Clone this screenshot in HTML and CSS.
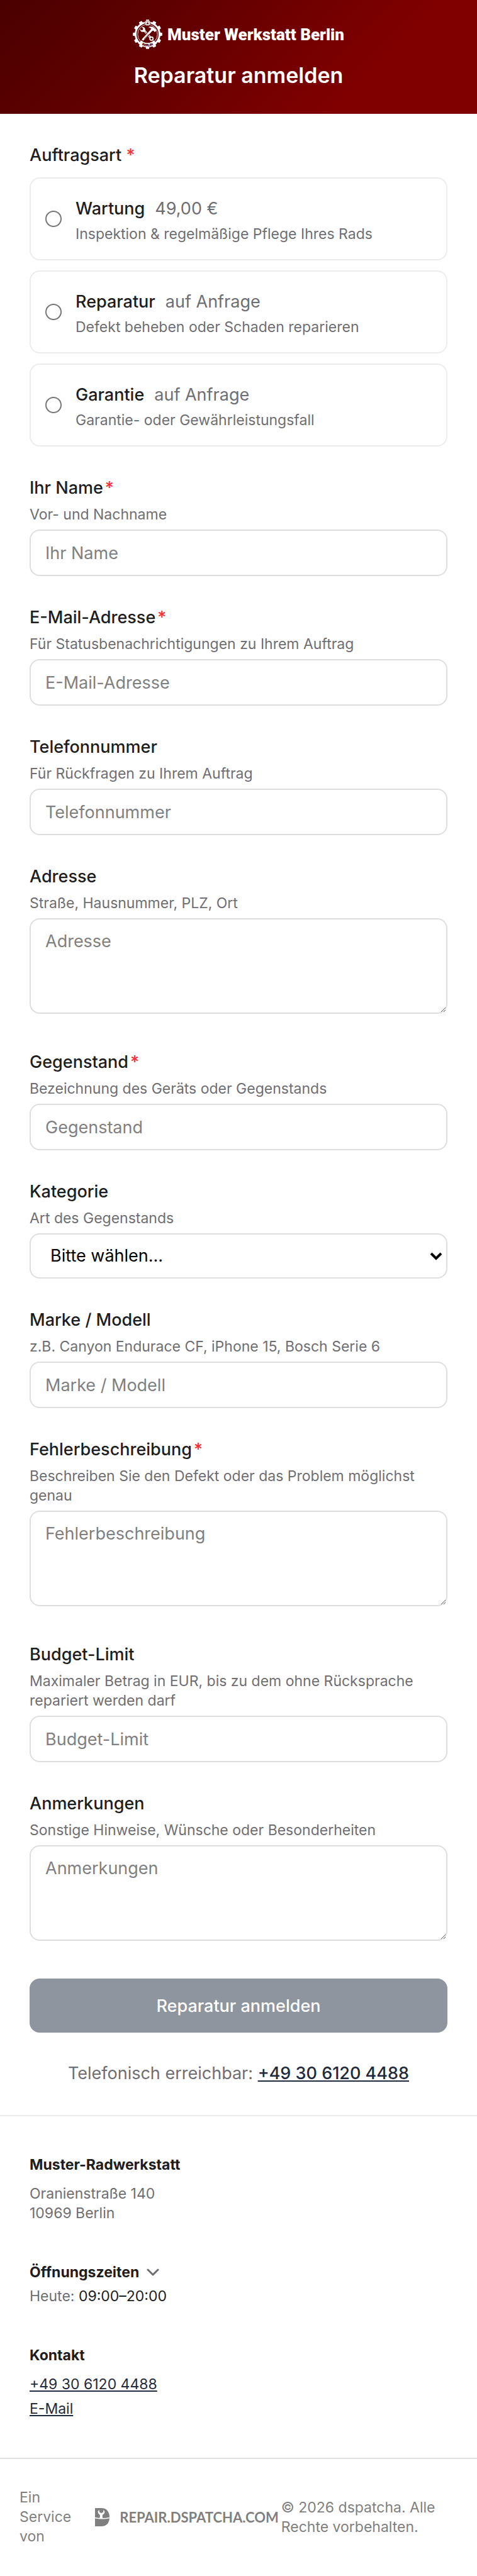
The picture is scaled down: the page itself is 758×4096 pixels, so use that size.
FILE: index.html
```html
<!DOCTYPE html>
<html lang="de">
<head>
  <meta charset="utf-8">
  <meta name="viewport" content="width=device-width, initial-scale=1">
  <title>Reparatur anmelden</title>
  <link rel="stylesheet" href="styles.css">
</head>
<body>
  <header class="header">
    <div class="brand">
      <svg class="brand-icon" viewBox="0 0 218 216" aria-hidden="true">
        <!-- gear -->
        <g fill="#fff">
          <path id="tooth" d="M95 18 L98 0 H120 L123 18 Z"/>
          <use href="#tooth" transform="rotate(30 109 108)"/>
          <use href="#tooth" transform="rotate(60 109 108)"/>
          <use href="#tooth" transform="rotate(90 109 108)"/>
          <use href="#tooth" transform="rotate(120 109 108)"/>
          <use href="#tooth" transform="rotate(150 109 108)"/>
          <use href="#tooth" transform="rotate(180 109 108)"/>
          <use href="#tooth" transform="rotate(210 109 108)"/>
          <use href="#tooth" transform="rotate(240 109 108)"/>
          <use href="#tooth" transform="rotate(270 109 108)"/>
          <use href="#tooth" transform="rotate(300 109 108)"/>
          <use href="#tooth" transform="rotate(330 109 108)"/>
        </g>
        <circle cx="109" cy="108" r="88" fill="none" stroke="#fff" stroke-width="13"/>
        <circle cx="109" cy="108" r="73" fill="none" stroke="#fff" stroke-width="4"/>
        <!-- top badge with star -->
        <path d="M90 10 H128 V36 L118 44 H100 L90 36 Z" fill="#fff" stroke="#5c0000" stroke-width="3"/>
        <path d="M109 15 L112 24 H121 L114 29 L117 38 L109 32 L101 38 L104 29 L97 24 H106 Z" fill="#5c0000"/>
        <!-- bottom band -->
        <path d="M52 164 A80 80 0 0 0 166 164" fill="none" stroke="#fff" stroke-width="32"/>
        <path id="band" d="M51 176 A90 90 0 0 0 167 176" fill="none"/>
        <text class="brand-band"><textPath href="#band" startOffset="50%" text-anchor="middle">BERLIN</textPath></text>
        <!-- wrench -->
        <path d="M84 80 L130 132" stroke="#fff" stroke-width="15"/>
        <path d="M87 84 L126 128" stroke="#5c0000" stroke-width="4"/>
        <path d="M66 55 L77 66 L74 76 L64 79 L55 68 C52 82 63 93 77 90 L85 93 L95 83 L91 76 C94 62 82 52 66 55 Z" fill="#fff"/>
        <circle cx="138" cy="140" r="12" fill="none" stroke="#fff" stroke-width="8"/>
        <!-- hammer -->
        <path d="M72 150 L142 74" stroke="#5c0000" stroke-width="24"/>
        <path d="M71 151 L142 74" stroke="#fff" stroke-width="15"/>
        <path d="M83 143 L118 105" stroke="#5c0000" stroke-width="3"/>
        <path d="M113 57 C128 47 148 50 158 62 L170 73 L174 81 L163 92 L155 86 L153 80 L143 84 L132 73 L136 67 C129 60 122 57 113 57 Z" fill="#fff"/>
      </svg>
      <span class="brand-name">Muster Werkstatt Berlin</span>
    </div>
    <h1 class="title">Reparatur anmelden</h1>
  </header>

  <main class="main">
    <form class="form">
      <fieldset class="types">
        <legend class="label">Auftragsart <span class="required">*</span></legend>
        <div class="type-list">
          <label class="type">
            <input class="radio" type="radio" name="type" value="wartung">
            <span class="type-text">
              <span class="type-head"><b class="type-name">Wartung</b><span>49,00 €</span></span>
              <span class="type-desc">Inspektion &amp; regelmäßige Pflege Ihres Rads</span>
            </span>
          </label>
          <label class="type">
            <input class="radio" type="radio" name="type" value="reparatur">
            <span class="type-text">
              <span class="type-head"><b class="type-name">Reparatur</b><span>auf Anfrage</span></span>
              <span class="type-desc">Defekt beheben oder Schaden reparieren</span>
            </span>
          </label>
          <label class="type">
            <input class="radio" type="radio" name="type" value="garantie">
            <span class="type-text">
              <span class="type-head"><b class="type-name">Garantie</b><span>auf Anfrage</span></span>
              <span class="type-desc">Garantie- oder Gewährleistungsfall</span>
            </span>
          </label>
        </div>
      </fieldset>

      <div class="field">
        <label class="label" for="name">Ihr Name<span class="required required-tight">*</span></label>
        <p class="hint">Vor- und Nachname</p>
        <input class="input" id="name" type="text" placeholder="Ihr Name">
      </div>
      <div class="field">
        <label class="label" for="email">E-Mail-Adresse<span class="required required-tight">*</span></label>
        <p class="hint">Für Statusbenachrichtigungen zu Ihrem Auftrag</p>
        <input class="input" id="email" type="email" placeholder="E-Mail-Adresse">
      </div>
      <div class="field">
        <label class="label" for="phone">Telefonnummer</label>
        <p class="hint">Für Rückfragen zu Ihrem Auftrag</p>
        <input class="input" id="phone" type="tel" placeholder="Telefonnummer">
      </div>
      <div class="field">
        <label class="label" for="address">Adresse</label>
        <p class="hint">Straße, Hausnummer, PLZ, Ort</p>
        <textarea class="input textarea" id="address" placeholder="Adresse"></textarea>
      </div>
      <div class="field">
        <label class="label" for="item">Gegenstand<span class="required required-tight">*</span></label>
        <p class="hint">Bezeichnung des Geräts oder Gegenstands</p>
        <input class="input" id="item" type="text" placeholder="Gegenstand">
      </div>
      <div class="field">
        <label class="label" for="category">Kategorie</label>
        <p class="hint">Art des Gegenstands</p>
        <div class="select-wrap">
          <select class="input select" id="category">
            <option>Bitte wählen...</option>
          </select>
          <svg class="select-arrow" viewBox="0 0 20 14" aria-hidden="true"><path d="M2 3 L10 11 L18 3" fill="none" stroke="#000" stroke-width="4"/></svg>
        </div>
      </div>
      <div class="field">
        <label class="label" for="model">Marke / Modell</label>
        <p class="hint">z.B. Canyon Endurace CF, iPhone 15, Bosch Serie 6</p>
        <input class="input" id="model" type="text" placeholder="Marke / Modell">
      </div>
      <div class="field">
        <label class="label" for="defect">Fehlerbeschreibung<span class="required required-tight">*</span></label>
        <p class="hint">Beschreiben Sie den Defekt oder das Problem möglichst genau</p>
        <textarea class="input textarea" id="defect" placeholder="Fehlerbeschreibung"></textarea>
      </div>
      <div class="field">
        <label class="label" for="budget">Budget-Limit</label>
        <p class="hint">Maximaler Betrag in EUR, bis zu dem ohne Rücksprache repariert werden darf</p>
        <input class="input" id="budget" type="text" placeholder="Budget-Limit">
      </div>
      <div class="field">
        <label class="label" for="notes">Anmerkungen</label>
        <p class="hint">Sonstige Hinweise, Wünsche oder Besonderheiten</p>
        <textarea class="input textarea" id="notes" placeholder="Anmerkungen"></textarea>
      </div>

      <button class="submit" type="submit">Reparatur anmelden</button>
    </form>
    <p class="call">Telefonisch erreichbar: <a class="link call-link" href="tel:+493061204488">+49 30 6120 4488</a></p>
  </main>

  <footer class="footer">
    <section>
      <h2 class="footer-title">Muster-Radwerkstatt</h2>
      <address class="footer-body">Oranienstraße 140<br>10969 Berlin</address>
    </section>
    <section>
      <button class="footer-title hours-toggle" type="button">
        Öffnungszeiten
        <svg class="chevron" viewBox="0 0 20 12" aria-hidden="true"><path d="M2 2 L10 10 L18 2" fill="none" stroke="#6e6e73" stroke-width="3" stroke-linecap="round" stroke-linejoin="round"/></svg>
      </button>
      <p class="hours">Heute: <span class="hours-time">09:00–20:00</span></p>
    </section>
    <section>
      <h2 class="footer-title">Kontakt</h2>
      <div class="footer-body contact">
        <a class="link" href="tel:+493061204488">+49 30 6120 4488</a>
        <a class="link" href="mailto:info@example.com">E-Mail</a>
      </div>
    </section>
  </footer>

  <div class="bottom">
    <span class="service">Ein Service von</span>
    <a class="platform" href="#">
      <svg class="platform-icon" viewBox="0 0 46 58" aria-hidden="true">
        <path d="M0 0 H20 C37 0 46 12 46 29 C46 47 37 58 20 58 H0 Z" fill="#7f7f7f"/>
        <path d="M0 31 Q23 36 46 31" fill="none" stroke="#fff" stroke-width="3"/>
        <path d="M13 6 C8 9 8 17 14 20 C17 23 16 28 14 33 H25 C23 28 22 23 26 20 C32 17 32 9 27 6 L26 13 L20 16 L14 13 Z" fill="#fff"/>
      </svg>
      <span>REPAIR.DSPATCHA.COM</span>
    </a>
    <span class="copyright">© 2026 dspatcha. Alle Rechte vorbehalten.</span>
  </div>
</body>
</html>
```

FILE: styles.css
```css
* {
  box-sizing: border-box;
}
body {
  margin: 0;
  background: #fff;
  color: #1d1d1f;
  font-family: Inter, "Liberation Sans", sans-serif;
  font-size: 27px;
}
h1, h2, p {
  margin: 0;
}

/* header */
.header {
  display: flex;
  flex-direction: column;
  align-items: center;
  gap: 19px;
  padding: 31px 31px 38px;
  background: linear-gradient(135deg, #4a0000 0%, #800000 75%);
  color: #fff;
}
.brand {
  display: flex;
  align-items: center;
  gap: 8px;
}
.brand-icon {
  width: 47px;
  height: 47px;
}
.brand-band {
  font-size: 24px;
  font-weight: 900;
  fill: #5c0000;
}
.brand-name {
  font-family: Impact, Roboto, sans-serif;
  font-size: 26px;
  font-weight: 900;
  line-height: 34px;
}
.title {
  font-size: 34px;
  font-weight: 600;
  line-height: 46px;
}

/* form */
.main {
  padding: 49px 47px 47px;
}
.form {
  display: flex;
  flex-direction: column;
  gap: 49px;
}
.types {
  min-width: 0;
  margin: 0;
  padding: 0;
  border: 0;
}
.label {
  display: block;
  padding: 0;
  font-weight: 500;
  line-height: 34px;
}
.required {
  color: #fb2c36;
}
.required-tight {
  margin-left: 3px;
}
.type-list {
  display: flex;
  flex-direction: column;
  gap: 16px;
  padding-top: 18px;
}
.type {
  display: flex;
  align-items: center;
  gap: 22px;
  padding: 27px 23px;
  border: 2px solid #ececec;
  border-radius: 16px;
  color: #6e6e73;
}
.radio {
  flex: none;
  width: 26px;
  height: 26px;
  margin: 0;
  appearance: none;
  border: 2px solid #767676;
  border-radius: 50%;
  background: #fff;
}
.radio:checked {
  border-width: 8px;
}
.type-text {
  display: flex;
  flex-direction: column;
  gap: 6px;
}
.type-head {
  display: flex;
  gap: 16px;
  line-height: 42px;
}
.type-name {
  color: #1d1d1f;
  font-weight: 500;
}
.type-desc {
  font-size: 23px;
  line-height: 26px;
}
.hint {
  margin: 10px 0 8px;
  color: #6e6e73;
  font-size: 23px;
  line-height: 31px;
}
.input {
  display: block;
  width: 100%;
  height: 74px;
  padding: 16px 23px;
  border: 2px solid #dedede;
  border-radius: 16px;
  background: #fff;
  color: #000;
  font: inherit;
  line-height: 38px;
}
.input::placeholder {
  color: #808080;
  opacity: 1;
}
.textarea {
  height: 152px;
  margin-bottom: 11px;
  resize: vertical;
}
.select-wrap {
  display: grid;
  align-items: center;
}
.select-wrap > * {
  grid-area: 1 / 1;
}
.select {
  height: 72px;
  padding: 0 31px;
  appearance: none;
}
.select-arrow {
  justify-self: end;
  width: 20px;
  height: 14px;
  margin-right: 8px;
  pointer-events: none;
}
.submit {
  height: 86px;
  border: 0;
  border-radius: 16px;
  background: #8e959e;
  color: #fff;
  font: inherit;
  font-weight: 500;
}
.call {
  margin-top: 46px;
  color: #6e6e73;
  line-height: 38px;
  text-align: center;
}
.link {
  color: #1f2a3c;
  text-decoration: underline 2px;
  text-underline-offset: 2px;
}
.call-link {
  font-weight: 500;
}

/* footer */
.footer {
  display: flex;
  flex-direction: column;
  gap: 62px;
  padding: 61px 47px 62px;
  border-top: 2px solid #ececec;
  color: #6e6e73;
  font-size: 23px;
  line-height: 31px;
}
.footer-title {
  color: #1d1d1f;
  font-size: 23px;
  font-weight: 700;
  line-height: 32px;
}
.footer-body {
  margin-top: 15px;
  font-style: normal;
}
.hours-toggle {
  display: flex;
  align-items: center;
  gap: 12px;
  padding: 0;
  border: 0;
  background: none;
  font-family: inherit;
}
.chevron {
  width: 20px;
  height: 12px;
}
.hours {
  margin-top: 7px;
}
.hours-time {
  color: #1d1d1f;
}
.contact {
  display: flex;
  flex-direction: column;
  align-items: flex-start;
  gap: 8px;
}
.bottom {
  display: flex;
  align-items: center;
  padding: 46px 31px;
  border-top: 2px solid #e2e2e2;
  color: #7f7f7f;
  font-size: 23px;
  line-height: 31px;
}
.service {
  width: min-content;
  margin-right: 38px;
}
.platform {
  display: flex;
  flex: none;
  align-items: center;
  gap: 16px;
  margin-right: 4px;
  color: inherit;
  font-family: Lato, sans-serif;
  font-size: 22px;
  font-weight: 700;
  text-decoration: none;
}
.platform-icon {
  width: 23px;
  height: 29px;
}
```
